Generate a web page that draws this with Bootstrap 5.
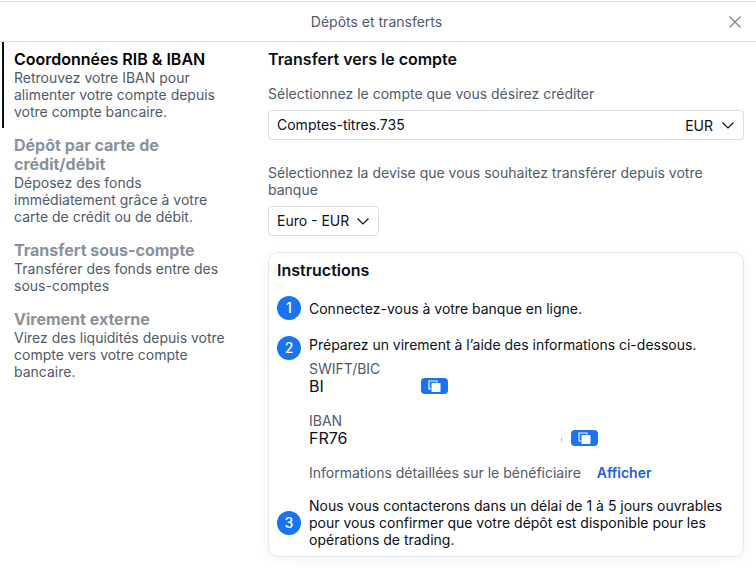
<!DOCTYPE html>
<html lang="fr">
<head>
<meta charset="utf-8">
<meta name="viewport" content="width=device-width, initial-scale=1">
<title>Dépôts et transferts</title>
<link href="https://cdn.jsdelivr.net/npm/bootstrap@5.3.0/dist/css/bootstrap.min.css" rel="stylesheet">
<style>
  body { font-family: Inter, "Liberation Sans", sans-serif; font-size: 14px; line-height: 17px; color: #0c1018; background: #fff; }
  .soft { color: #505a69; }
  .topbar { height: 41px; margin-top: 1px; padding-right: 3px; border-top: 1px solid #dcdfe3; border-bottom: 1px solid #dcdfe3; }
  .topbar h1 { font-size: 14px; line-height: 17px; font-weight: 400; margin: 0; }
  .close-btn { right: 14px; top: 13px; line-height: 0; }
  .layout { display: grid; grid-template-columns: 256px minmax(0, 1fr); }
  .side { padding-left: 2px; }
  .side a { display: block; padding: 8px 16px 8px 10px; border-left: 2px solid transparent; color: #505a69; text-decoration: none; }
  .side strong { display: block; font-size: 16px; line-height: 19px; font-weight: 700; color: #89919c; }
  .side a.current { border-left-color: #0c1018; }
  .side a.current strong { color: #000; font-weight: 600; }
  .pane { padding: 8px 12px 16px 12px; }
  .pane h2 { font-size: 16px; line-height: 19px; font-weight: 600; margin: 0; }
  .pick { appearance: none; height: 30px; padding: 0 8px 1px; border: 1px solid #dcdfe3; border-radius: 4px; background: #fff; color: #0c1018; }
  .pick-short { padding-right: 28px; }
  .pick-end { right: 10px; gap: 9px; pointer-events: none; }
  .sheet { margin-top: 16px; padding: 8px; border: 1px solid #e4e9f0; border-radius: 10px; box-shadow: 0 2px 12px rgba(70, 120, 220, .08); }
  .step { display: grid; grid-template-columns: 24px minmax(0, 1fr); column-gap: 8px; }
  .num { width: 24px; height: 24px; border-radius: 50%; background: #1a73f0; color: #fff; font-weight: 500; line-height: 23px; text-align: center; }
  .lead-line { margin-bottom: 7px; }
  .detail { margin-top: 17px; }
  .value { font-size: 16px; line-height: 18px; }
  .bic { width: 112px; }
  .iban { width: 262px; padding-right: 9px; }
  .copy { width: 27px; height: 16px; padding: 0; border: 0; border-radius: 4px; background: #1a73f0; line-height: 0; }
  .show-link { color: #1a5fdc; font-weight: 600; text-decoration: none; }
</style>
<script src="https://cdn.jsdelivr.net/npm/bootstrap@5.3.0/dist/js/bootstrap.bundle.min.js"></script>
</head>
<body>
<svg class="d-none" aria-hidden="true">
  <symbol id="chevron" viewBox="0 0 12 7"><path d="M.5.5 6 6 11.500.5" fill="none" stroke="#0c1018" stroke-width="1.200"/></symbol>
  <symbol id="copies" viewBox="0 0 13 12"><path d="M3 9H1V1h8v1.500" fill="none" stroke="#fff" stroke-width="1.200"/><rect x="3.500" y="3" width="9" height="9" rx=".5" fill="#fff"/></symbol>
</svg>

<header class="topbar position-relative d-flex align-items-center justify-content-center">
  <h1 class="soft">Dépôts et transferts</h1>
  <button type="button" class="close-btn btn p-0 border-0 position-absolute" aria-label="Fermer">
    <svg width="14" height="14" viewBox="0 0 14 14"><path d="M1.500 1.500l11 11M12.500 1.500l-11 11" stroke="#7b828e" stroke-width="1.200"/></svg>
  </button>
</header>

<div class="layout">
  <nav class="side" aria-label="Opérations">
    <a href="#" class="current" aria-current="page"><strong>Coordonnées RIB &amp; IBAN</strong>Retrouvez votre IBAN pour alimenter votre compte depuis votre compte bancaire.</a>
    <a href="#"><strong>Dépôt par carte de crédit/débit</strong>Déposez des fonds immédiatement grâce à votre carte de crédit ou de débit.</a>
    <a href="#"><strong>Transfert sous-compte</strong>Transférer des fonds entre des sous-comptes</a>
    <a href="#"><strong>Virement externe</strong>Virez des liquidités depuis votre compte vers votre compte bancaire.</a>
  </nav>

  <main class="pane">
    <h2>Transfert vers le compte</h2>
    <label class="soft d-block mt-3 mb-2" for="account">Sélectionnez le compte que vous désirez créditer</label>
    <div class="position-relative">
      <select id="account" class="pick w-100"><option>Comptes-titres.735</option></select>
      <div class="pick-end position-absolute top-0 bottom-0 d-flex align-items-center">
        <span>EUR</span>
        <svg width="12" height="7"><use href="#chevron"/></svg>
      </div>
    </div>

    <label class="soft d-block mt-4 mb-2" for="currency">Sélectionnez la devise que vous souhaitez transférer depuis votre banque</label>
    <div class="position-relative d-inline-flex">
      <select id="currency" class="pick pick-short"><option>Euro - EUR</option></select>
      <div class="pick-end position-absolute top-0 bottom-0 d-flex align-items-center">
        <svg width="12" height="7"><use href="#chevron"/></svg>
      </div>
    </div>

    <section class="sheet">
      <h2>Instructions</h2>
      <div class="step align-items-center mt-3">
        <span class="num">1</span>
        <div>Connectez-vous à votre banque en ligne.</div>
      </div>
      <div class="step mt-3">
        <span class="num">2</span>
        <div>
          <div class="lead-line">Préparez un virement à l’aide des informations ci-dessous.</div>
          <div class="soft">SWIFT/BIC</div>
          <div class="d-flex align-items-center">
            <span class="value bic">BI</span>
            <button type="button" class="copy" aria-label="Copier le code SWIFT/BIC"><svg width="13" height="12"><use href="#copies"/></svg></button>
          </div>
          <div class="soft detail">IBAN</div>
          <div class="d-flex align-items-center">
            <span class="value iban d-flex align-items-center justify-content-between">FR76
              <svg width="1" height="10" aria-hidden="true"><path d="M0 2h1v1H0z" fill="#cfe4f2"/><path d="M0 5h1v4H0z" fill="#9ccbe8"/></svg>
            </span>
            <button type="button" class="copy" aria-label="Copier l’IBAN"><svg width="13" height="12"><use href="#copies"/></svg></button>
          </div>
          <div class="d-flex gap-3 detail">
            <span class="soft">Informations détaillées sur le bénéficiaire</span>
            <a href="#" class="show-link">Afficher</a>
          </div>
        </div>
      </div>
      <div class="step align-items-center mt-3">
        <span class="num">3</span>
        <div>Nous vous contacterons dans un délai de 1 à 5 jours ouvrables pour vous confirmer que votre dépôt est disponible pour les opérations de trading.</div>
      </div>
    </section>
  </main>
</div>
</body>
</html>
